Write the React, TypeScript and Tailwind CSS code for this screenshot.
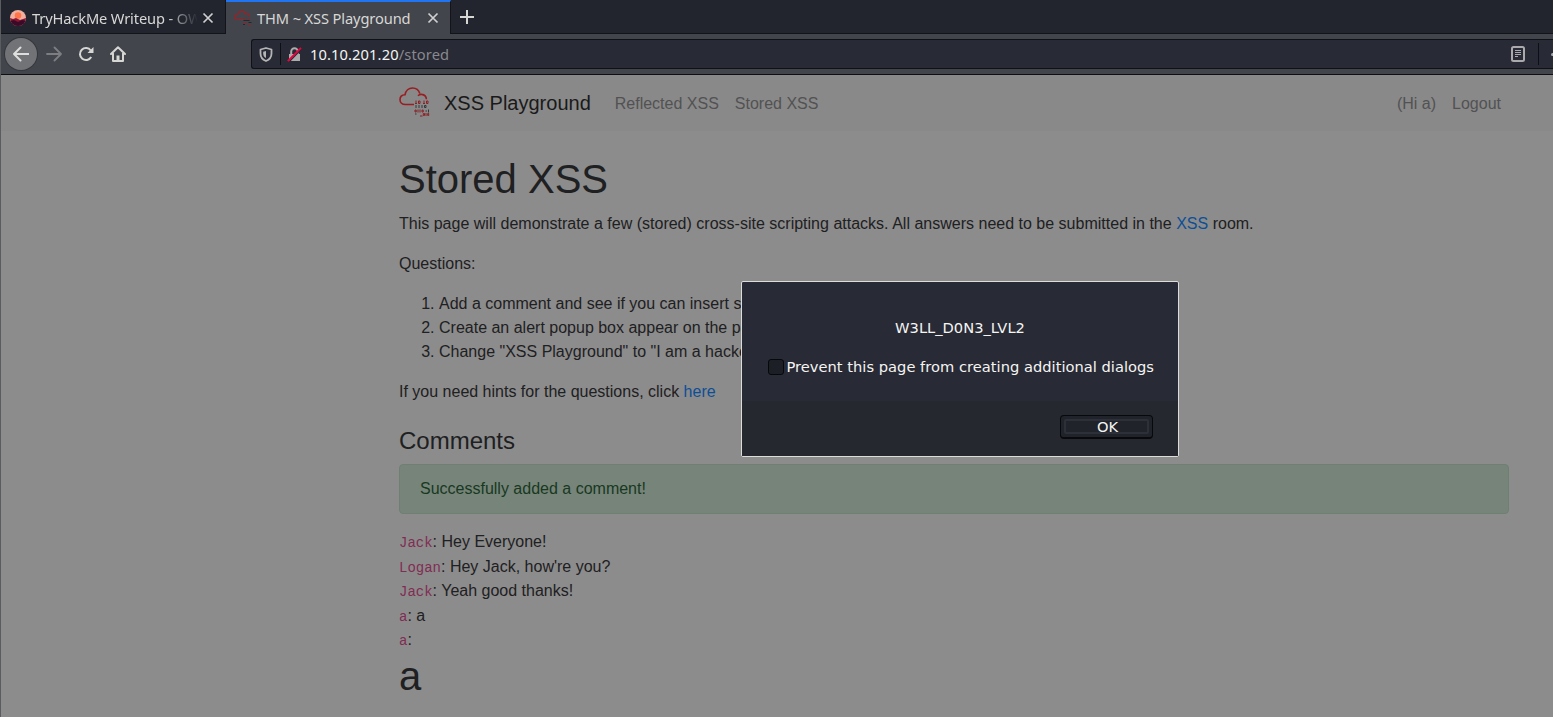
import React from 'react';

const sans = "font-['Liberation_Sans',sans-serif]";

function CloudLogo({ className }: { className?: string }) {
  return (
    <svg className={className} viewBox="0 0 31 32" fill="none">
      <path
        d="M15 17.500H6.500C3 17.500 1 15.400 1 12.700C1 10 3 8 6 7.800C6.700 3.800 9.700 1 13.500 1C17.200 1 19.800 3.100 20.800 6.500M19 8.800C20 7.700 21.300 7.200 22.600 7.400C25.400 7.700 27.300 9.800 27.400 12.300"
        stroke="#991d22"
        strokeWidth="1.600"
      />
      <g stroke="#8c2026" strokeWidth="1">
        <path d="M17 13.500v3M16 16.500h2M19.500 14h1.500v2.500h-1.500zM25 13.500v3M24 16.500h2M27.500 14H29v2.500h-1.500z" />
        <path d="M16 23h1.200v2H16zM19 22.500v3M21 22.500v3M23 23h1.200v2H23zM24.300 26.500h1.200v2h-1.200zM27 26v3M28.700 26.500h1v2h-1zM21 29h2.500" />
      </g>
      <g stroke="#34363a" strokeWidth="1">
        <path d="M17 18v3M20 18v3M23 18v3M25.500 18.500H27v2h-1.500zM26.500 24h1.500M29.500 22.500v3M16 27h1.500" />
      </g>
    </svg>
  );
}

function Close() {
  return (
    <svg className="size-[12px]" viewBox="0 0 12 12" stroke="#d0d0d0" strokeWidth="1.700">
      <path d="M1.500 1.500l9 9M10.500 1.500l-9 9" />
    </svg>
  );
}

function TabBar() {
  return (
    <div className="flex h-[34px] bg-[#22242e] text-[14.67px] text-[#d8d8d6]">
      <div className="flex w-[225px] items-center border-r border-b border-[#12141a] pt-[2px] pl-[9px]">
        <svg className="size-4 shrink-0" viewBox="0 0 16 16">
          <defs>
            <clipPath id="disc"><circle cx="8" cy="8" r="8" /></clipPath>
          </defs>
          <g clipPath="url(#disc)">
            <path fill="#f0b0a0" d="M0 0h16v16H0z" />
            <circle cx="8" cy="5.500" r="3.300" fill="#ff7548" />
            <path fill="#8d1735" d="M0 8l3 1 3-1 4 2 6-2v8H0z" />
            <path fill="#3a0b29" d="M0 11l4-1 4 2 4-2 4 1v5H0z" />
          </g>
        </svg>
        <span className="ml-[6px] w-[165px] overflow-hidden whitespace-nowrap leading-[30px] tracking-[-0.140px] [mask-image:linear-gradient(to_right,#000_135px,transparent_166px)]">
          TryHackMe Writeup - OW
        </span>
        <span className="ml-[5px] shrink-0"><Close /></span>
      </div>
      <div className="flex w-[225px] items-center border-t-2 border-r border-t-[#1f75f2] border-r-[#12141a] bg-[#42454c] pl-[8px]">
        <svg className="h-[17px] w-[18px] shrink-0" viewBox="0 0 18 17" fill="none" strokeWidth="1.100">
          <path d="M9 9.500H3.500C-.2 9.300.200 4.600 3.600 4.500C4.500.300 10.500.200 11.500 4C14 3.200 15.500 4.500 15.500 6.500" stroke="#a81c22" />
          <path d="M9.500 8.500h2.500M13.500 8.500h2.500M9 12.500h4M14 14.500h3" stroke="#8f2328" />
          <path d="M9.500 10.500h6M14.500 12.500h3M9 14.500h2" stroke="#25272c" />
        </svg>
        <span className="ml-[5px] w-[170px] whitespace-nowrap leading-[30px] tracking-[-0.120px]">THM ~ XSS Playground</span>
        <span className="shrink-0"><Close /></span>
      </div>
      <div className="flex flex-1 items-center border-b border-[#12141a] pl-[9px]">
        <svg className="size-[14px]" viewBox="0 0 14 14" stroke="#d6d6d4" strokeWidth="2">
          <path d="M7 0v14M0 7h14" />
        </svg>
      </div>
    </div>
  );
}

function Toolbar() {
  return (
    <div className="flex h-[41px] items-center border-b border-[#0e0f13] bg-[#42454c]">
      <div className="ml-[4px] flex size-8 items-center justify-center rounded-full bg-[#717376] ring-1 ring-[#35373d]">
        <svg className="size-4" viewBox="0 0 16 16" fill="none" stroke="#dededc" strokeWidth="2" strokeLinecap="round" strokeLinejoin="round">
          <path d="M7.500 1.500L1 8l6.500 6.500M1 8h14.500" />
        </svg>
      </div>
      <svg className="ml-[9px] size-4" viewBox="0 0 16 16" fill="none" stroke="#7c7e82" strokeWidth="1.800" strokeLinecap="round" strokeLinejoin="round">
        <path d="M8.500 1.500L15 8l-6.500 6.500M15 8H1" />
      </svg>
      <svg className="ml-4 size-4" viewBox="0 0 16 16" fill="none" stroke="#d6d6d3" strokeWidth="2">
        <path d="M13.200 11A6 6 0 1 1 12.800 4.500" />
        <path d="M15.500 1v6h-6z" fill="#d6d6d3" stroke="none" />
      </svg>
      <svg className="ml-4 size-4" viewBox="0 0 16 16" fill="none" stroke="#d6d6d3" strokeWidth="2" strokeLinejoin="round">
        <path d="M1 8l7-6.700L15 8M3 7.500V15h10V7.500" strokeLinecap="round" />
        <path d="M6.500 15V9.500h3V15z" fill="#d6d6d3" stroke="none" />
      </svg>
      <div className="ml-[125px] flex h-[30px] flex-1 items-center rounded-l-[3px] border border-r-0 border-[#101116] bg-[#282a35]">
        <svg className="ml-[7px] h-[15px] w-[14px]" viewBox="0 0 14 15" fill="none">
          <path d="M7 1L1.500 2.500v4C1.500 10.500 4 12.800 7 14c3-1.200 5.500-3.500 5.500-7.500v-4z" stroke="#b5b5b6" strokeWidth="1.800" strokeLinejoin="round" />
          <path d="M7 4v7C5 10 4.200 8.500 4.200 6.500V4.700z" fill="#b5b5b6" />
        </svg>
        <i className="ml-[7px] h-[22px] w-px bg-[#0e0f14]" />
        <svg className="ml-[6px] size-[15px]" viewBox="0 0 15 15" fill="none">
          <path d="M2 7h11v7H2z" fill="#acacad" />
          <path d="M4.200 7V4.500a3.300 3.300 0 0 1 6.600 0V7" stroke="#acacad" strokeWidth="2" />
          <path d="M1.800 15L15 1.500" stroke="#282a35" strokeWidth="1.500" />
          <path d="M.8 14.200L14 .8" stroke="#f0003c" strokeWidth="1.800" />
        </svg>
        <span className="ml-[8px] text-[14.67px] leading-none tracking-[0.120px] text-[#f5f5f3]">
          10.10.201.20<span className="text-[#88898e]">/stored</span>
        </span>
        <svg className="ml-auto h-4 w-[14px]" viewBox="0 0 14 16" fill="none" stroke="#aaaaac">
          <rect x="1" y="1" width="12" height="14" rx="1.500" strokeWidth="2" />
          <path d="M4 4.500h6M4 6.500h6M4 8.500h6M4 10.500h3" />
        </svg>
        <i className="ml-[13px] h-[22px] w-px bg-[#0e0f14]" />
        <i className="ml-3 h-[3px] w-[2px] rounded-l-full bg-[#aaaaac]" />
      </div>
    </div>
  );
}

function NavBar() {
  return (
    <nav className="flex h-14 items-center bg-[#898989] pr-[52px] pl-[399px] text-[#525253]">
      <CloudLogo className="h-8 w-[31px]" />
      <span className="ml-[14px] text-[20px] text-[#1a1a1a]">XSS Playground</span>
      <span className="ml-6 pt-px">Reflected XSS</span>
      <span className="ml-4 pt-px">Stored XSS</span>
      <span className="ml-auto pt-px">(Hi a)</span>
      <span className="ml-4 pt-px">Logout</span>
    </nav>
  );
}

const comments: [string, string][] = [
  ['Jack', 'Hey Everyone!'],
  ['Logan', "Hey Jack, how're you?"],
  ['Jack', 'Yeah good thanks!'],
  ['a', 'a'],
  ['a', ''],
];

function Page() {
  return (
    <main className="ml-[399px] w-[1110px] pt-6">
      <h1 className="mb-[9px] text-[40px] leading-[48px]">Stored XSS</h1>
      <p className="mb-4 tracking-[0.007px]">
        This page will demonstrate a few (stored) cross-site scripting attacks. All answers need to be submitted in the{' '}
        <a className="text-[#0d4f96]">XSS</a> room.
      </p>
      <p className="mb-4">Questions:</p>
      <ol className="mb-4 list-decimal pl-10">
        <li>Add a comment and see if you can insert some</li>
        <li>Create an alert popup box appear on the page</li>
        <li>Change "XSS Playground" to "I am a hacker"</li>
      </ol>
      <p className="mb-[22px]">
        If you need hints for the questions, click <a className="text-[#0d4f96]">here</a>
      </p>
      <h4 className="mb-[9px] text-[24px] leading-[29px]">Comments</h4>
      <div className="mb-4 h-[50px] rounded border border-[#6f8073] bg-[#77847a] px-5 py-3 text-[#18391f]">
        Successfully added a comment!
      </div>
      {comments.map(([name, text], i) => (
        <div key={i} className="h-[24.5px]">
          <code className="font-['Liberation_Mono',monospace] text-[14px] text-[#812c53]">{name}</code>: {text}
        </div>
      ))}
      <h1 className="-mt-[0.500px] text-[40px] leading-[48px]">a</h1>
    </main>
  );
}

function Dialog() {
  return (
    <div className="absolute top-[281px] left-[740px] flex h-[176px] w-[438px] flex-col rounded-[2px] border border-[#dcdcda] bg-[#282a35] font-['DejaVu_Sans',sans-serif] text-[14.67px] text-[#f4f4f2]">
      <div className="h-[119px] pt-[36px]">
        <div className="text-center leading-5">W3LL_D0N3_LVL2</div>
        <div className="mt-[19px] flex items-center pl-[26px] leading-5">
          <i className="size-4 shrink-0 rounded-[3px] border border-[#07080a] bg-[#1d1f26]" />
          <span className="ml-[2.500px] whitespace-nowrap tracking-[0.015px]">Prevent this page from creating additional dialogs</span>
        </div>
      </div>
      <div className="flex flex-1 justify-end bg-[#262830] pt-[14px] pr-[25px]">
        <button className="h-6 w-[93px] rounded-[4px] border border-b-2 border-[#08090c] bg-[#21232b] p-[3px]">
          <span className="flex h-full items-center justify-center rounded-[2px] border-2 border-[#2d3038] pt-px pl-[2px] leading-none">OK</span>
        </button>
      </div>
    </div>
  );
}

export default function App() {
  return (
    <div className="relative h-[717px] w-[1553px] overflow-hidden border-l border-[#5a5c60] bg-[#8c8c8c]">
      <div className="font-['Noto_Sans',sans-serif]">
        <TabBar />
        <Toolbar />
      </div>
      <div className={`${sans} -ml-px text-[16px] leading-6 text-[#1e2022]`}>
        <NavBar />
        <Page />
      </div>
      <Dialog />
    </div>
  );
}
